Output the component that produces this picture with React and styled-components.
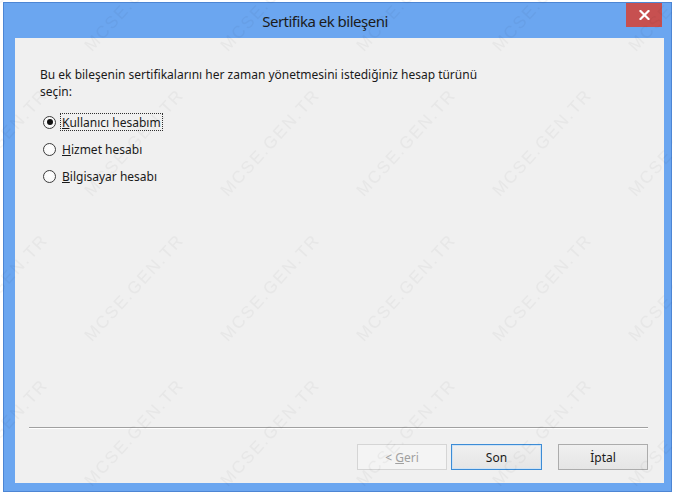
import React from "react";
import styled, { createGlobalStyle } from "styled-components";

const GlobalStyle = createGlobalStyle`
  html, body {
    margin: 0;
    padding: 0;
    background: #ffffff;
  }
  body {
    font-family: "Noto Sans", "Liberation Sans", sans-serif;
  }
`;

const ACCOUNTS = [
  { id: "user", mnemonic: "K", rest: "ullanıcı hesabım" },
  { id: "service", mnemonic: "H", rest: "izmet hesabı" },
  { id: "computer", mnemonic: "B", rest: "ilgisayar hesabı" },
];

class App extends React.Component {
  state = {
    account: "user",
  };

  render() {
    return (
      <Screen>
        <GlobalStyle />
        <Window>
          <TitleBar>
            <Title>Sertifika ek bileşeni</Title>
            <CloseButton aria-label="Kapat">
              <svg width="11" height="10" viewBox="0 0 11 10">
                <path
                  d="M1.5 1 L9.5 9 M9.5 1 L1.5 9"
                  stroke="#ffffff"
                  strokeWidth="2.2"
                  strokeLinecap="square"
                />
              </svg>
            </CloseButton>
          </TitleBar>

          <Client>
            <Body>
              <Prompt>
                Bu ek bileşenin sertifikalarını her zaman yönetmesini istediğiniz hesap türünü
                <br />
                seçin:
              </Prompt>

              <RadioList>
                {ACCOUNTS.map((acc) => {
                  const checked = this.state.account === acc.id;
                  return (
                    <RadioRow
                      key={acc.id}
                      onClick={() => this.setState({ account: acc.id })}
                    >
                      <RadioCircle $checked={checked} />
                      <RadioLabel $focused={checked}>
                        <u>{acc.mnemonic}</u>
                        {acc.rest}
                      </RadioLabel>
                    </RadioRow>
                  );
                })}
              </RadioList>
            </Body>

            <Divider />

            <ButtonRow>
              <DialogButton disabled>
                &lt; <u>G</u>eri
              </DialogButton>
              <DialogButton $primary>Son</DialogButton>
              <DialogButton $spaced>İptal</DialogButton>
            </ButtonRow>
          </Client>
        </Window>

        <Watermark width="673" height="493">
          <defs>
            <pattern
              id="wm"
              patternUnits="userSpaceOnUse"
              x="67"
              y="71"
              width="136"
              height="145"
            >
              <text
                x="68"
                y="72.5"
                textAnchor="middle"
                dominantBaseline="middle"
                fontFamily="Liberation Sans, sans-serif"
                fontSize="17"
                letterSpacing="1.8"
                fill="rgba(0,0,0,0.04)"
                transform="rotate(-47.5 68 72.5)"
              >
                MCSE.GEN.TR
              </text>
            </pattern>
          </defs>
          <rect width="673" height="493" fill="url(#wm)" />
        </Watermark>
      </Screen>
    );
  }
}

const Screen = styled.div`
  position: relative;
  width: 673px;
  height: 493px;
  overflow: hidden;
`;

const Window = styled.div`
  box-sizing: border-box;
  margin: 2px 0 0 3px;
  width: 669px;
  height: 490px;
  border: 1px solid #4d86d4;
  background: #6ba6f0;
  padding: 0 7px 8px 11px;
  display: flex;
  flex-direction: column;
`;

const TitleBar = styled.div`
  height: 35px;
  flex: none;
  display: flex;
  align-items: flex-start;
`;

const Title = styled.div`
  flex: 1;
  text-align: center;
  padding-left: 9px;
  padding-top: 7px;
  font-size: 15px;
  letter-spacing: -0.5px;
  line-height: 22px;
  color: #1b1b1b;
`;

const CloseButton = styled.div`
  width: 36px;
  height: 24px;
  margin-right: 2px;
  background: #c75050;
  display: flex;
  align-items: center;
  justify-content: center;
`;

const Client = styled.div`
  flex: 1;
  background: #f0f0f0;
  display: flex;
  flex-direction: column;
`;

const Body = styled.div`
  flex: 1;
  padding: 28px 25px 0;
`;

const Prompt = styled.p`
  margin: 0;
  font-size: 12px;
  line-height: 17px;
  color: #1a1a1a;
`;

const RadioList = styled.div`
  margin-top: 13px;
  margin-left: 3px;
  display: flex;
  flex-direction: column;
  gap: 9px;
`;

const RadioRow = styled.div`
  display: flex;
  align-items: center;
  height: 18px;
  cursor: default;
`;

const RadioCircle = styled.span`
  box-sizing: border-box;
  width: 13px;
  height: 13px;
  border-radius: 50%;
  border: 1px solid #3c3c3c;
  background: radial-gradient(circle at 50% 40%, #ffffff 0%, #f4f4f4 100%);
  position: relative;
  flex: none;

  &::after {
    content: "";
    display: ${(p) => (p.$checked ? "block" : "none")};
    position: absolute;
    left: 2.5px;
    top: 2.5px;
    width: 6px;
    height: 6px;
    border-radius: 50%;
    background: #111111;
  }
`;

const RadioLabel = styled.span`
  margin-left: 4px;
  padding: 0 1px;
  height: 18px;
  box-sizing: border-box;
  display: flex;
  align-items: center;
  font-size: 12px;
  color: #1a1a1a;
  border: 1px dotted ${(p) => (p.$focused ? "#303030" : "transparent")};
`;

const Divider = styled.div`
  margin: 0 16px 0 14px;
  border-top: 1px solid #a0a0a0;
  border-bottom: 1px solid #ffffff;
`;

const ButtonRow = styled.div`
  display: flex;
  justify-content: flex-end;
  gap: 4px;
  padding: 15px 16px 13px;
`;

const DialogButton = styled.button`
  box-sizing: border-box;
  width: ${(p) => (p.$primary ? "91px" : "90px")};
  height: 26px;
  margin-left: ${(p) => (p.$spaced ? "12px" : "0")};
  padding: 0;
  font-family: "Noto Sans", "Liberation Sans", sans-serif;
  font-size: 12px;
  color: #1a1a1a;
  background: linear-gradient(#f0f0f0, #e5e5e5);
  border: 1px solid ${(p) => (p.$primary ? "#3c8cd6" : "#acacac")};
  border-radius: 0;
  box-shadow: ${(p) => (p.$primary ? "inset 0 0 0 1px #cfe3f5" : "none")};

  &:disabled {
    color: #a0a0a0;
    background: #f4f4f4;
    border-color: #d5d5d5;
  }
`;

const Watermark = styled.svg`
  position: absolute;
  left: 0;
  top: 0;
  pointer-events: none;
`;

export default App;
